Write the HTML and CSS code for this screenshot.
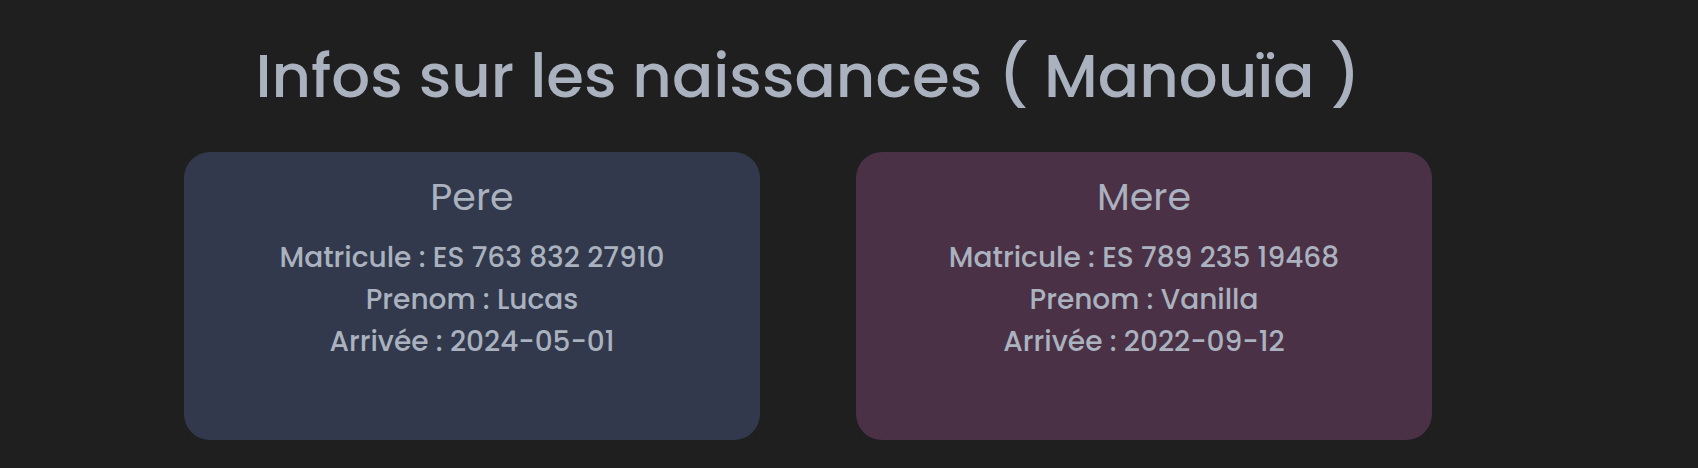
FILE: index.html
```html
<!DOCTYPE html>
<html lang="fr">
<head>
<meta charset="utf-8">
<title>Infos sur les naissances</title>
<link rel="stylesheet" href="styles.css">
</head>
<body>
<main class="page">
  <h1 class="title">Infos sur les naissances ( Manouïa )</h1>
  <section class="cards">
    <article class="card card-pere">
      <h2 class="card-title">Pere</h2>
      <p class="line">Matricule : ES 763 832 27910</p>
      <p class="line">Prenom : Lucas</p>
      <p class="line">Arrivée : 2024-05-01</p>
    </article>
    <article class="card card-mere">
      <h2 class="card-title">Mere</h2>
      <p class="line">Matricule : ES 789 235 19468</p>
      <p class="line">Prenom : Vanilla</p>
      <p class="line">Arrivée : 2022-09-12</p>
    </article>
  </section>
</main>
</body>
</html>
```
FILE: styles.css
```css
html, body {
  margin: 0;
  padding: 0;
  background: #1f1f1f;
}
body {
  font-family: "Poppins", "Inter", "DejaVu Sans", sans-serif;
  color: #aab2bf;
}
.page {
  width: 1616px;
  display: flex;
  flex-direction: column;
  align-items: center;
}
.title {
  margin: 40px 0 0 0;
  font-size: 61px;
  font-weight: 500;
  line-height: 72px;
}
.cards {
  display: flex;
  gap: 96px;
  margin-top: 40px;
}
.card {
  width: 576px;
  height: 288px;
  box-sizing: border-box;
  border-radius: 26px;
  padding: 16px 0 0 0;
  text-align: center;
}
.card-pere { background: #32394c; }
.card-mere { background: #4a3146; }
.card-title {
  margin: 0 0 12px 0;
  font-size: 38px;
  font-weight: 400;
  line-height: 57px;
}
.line {
  margin: 0;
  font-size: 28px;
  font-weight: 500;
  line-height: 42px;
}
```
